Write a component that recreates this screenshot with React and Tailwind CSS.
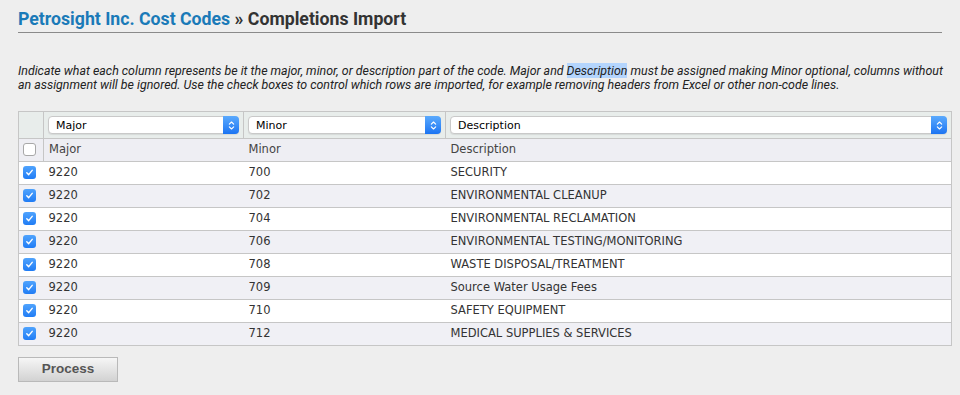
const rows = [
  ['9220', '700', 'SECURITY'],
  ['9220', '702', 'ENVIRONMENTAL CLEANUP'],
  ['9220', '704', 'ENVIRONMENTAL RECLAMATION'],
  ['9220', '706', 'ENVIRONMENTAL TESTING/MONITORING'],
  ['9220', '708', 'WASTE DISPOSAL/TREATMENT'],
  ['9220', '709', 'Source Water Usage Fees'],
  ['9220', '710', 'SAFETY EQUIPMENT'],
  ['9220', '712', 'MEDICAL SUPPLIES & SERVICES'],
];

const Check = ({ checked }) =>
  checked ? (
    <span className="inline-flex h-[13px] w-[13px] items-center justify-center rounded-[3px] bg-gradient-to-b from-[#4fa3fd] to-[#1f7cf5] align-middle">
      <svg viewBox="0 0 10 10" className="h-[9px] w-[9px]">
        <path d="M2 5.3 L4.1 7.4 L8 2.6" fill="none" stroke="white" strokeWidth="1.6" strokeLinecap="round" strokeLinejoin="round" />
      </svg>
    </span>
  ) : (
    <span className="inline-block h-[13px] w-[13px] rounded-[3px] border border-[#a8a8a8] bg-white align-middle" />
  );

const Select = ({ label }) => (
  <div className="flex h-[18px] w-full items-center rounded-[4px] border border-[#c9c9c9] bg-white shadow-[0_1px_1px_rgba(0,0,0,0.08)]">
    <span className="flex-1 pl-[7px] text-[11px] leading-none text-black">{label}</span>
    <span className="flex h-[18px] w-[16px] -mr-px -my-px items-center justify-center rounded-r-[4px] bg-gradient-to-b from-[#5aaafd] to-[#1b74f2]">
      <svg viewBox="0 0 8 12" className="h-[11px] w-[7px]">
        <path d="M1.5 4.5 L4 2 L6.5 4.5 M1.5 7.5 L4 10 L6.5 7.5" fill="none" stroke="white" strokeWidth="1.3" strokeLinecap="round" strokeLinejoin="round" />
      </svg>
    </span>
  </div>
);

export default function App() {
  return (
    <div className="min-h-[395px] bg-[#eeeeee] px-[18px] pt-[8px] font-['Roboto',sans-serif]">
      <h1 className="border-b border-[#8a8a8a] pb-[2px] text-[17.7px] font-bold leading-[22px] text-[#333]">
        <span className="text-[#1a7ab8]">Petrosight Inc. Cost Codes</span> » Completions Import
      </h1>

      <p className="-mr-[10px] mt-[31px] text-[12.4px] italic leading-[14px] text-[#222]">
        Indicate what each column represents be it the major, minor, or description part of the code. Major and{' '}
        <span className="bg-[#b4d5fd]">Description</span> must be assigned making Minor optional, columns without an
        assignment will be ignored. Use the check boxes to control which rows are imported, for example removing headers
        from Excel or other non-code lines.
      </p>

      <table className="mt-[19px] w-[934px] table-fixed border-collapse font-['DejaVu_Sans',sans-serif] text-[11.5px] text-[#333]">
        <colgroup>
          <col className="w-[25px]" />
          <col className="w-[200px]" />
          <col className="w-[202px]" />
          <col />
        </colgroup>
        <thead>
          <tr className="h-[27px] bg-[#e8edeb]">
            <td className="border border-[#c6c6c6] p-0" />
            <td className="border border-[#c6c6c6] px-[4px] py-0"><Select label="Major" /></td>
            <td className="border border-[#c6c6c6] px-[4px] py-0"><Select label="Minor" /></td>
            <td className="border border-[#c6c6c6] px-[4px] py-0"><Select label="Description" /></td>
          </tr>
          <tr className="h-[23px] bg-[#eeeef3] text-[#444]">
            <td className="border border-[#c6c6c6] py-0 pl-[4px]"><Check /></td>
            <td className="border-y border-[#c6c6c6] py-0 pl-[5px]">Major</td>
            <td className="border-y border-[#c6c6c6] py-0 pl-[5px]">Minor</td>
            <td className="border border-l-0 border-[#c6c6c6] py-0 pl-[5px]">Description</td>
          </tr>
        </thead>
        <tbody>
          {rows.map((r, i) => (
            <tr key={r[1]} className={`h-[23px] ${i % 2 ? 'bg-[#f0f0f5]' : 'bg-white'}`}>
              <td className="border-y border-l border-[#c6c6c6] py-0 pl-[4px]"><Check checked /></td>
              <td className="border-y border-[#c6c6c6] py-0 pl-[5px]">{r[0]}</td>
              <td className="border-y border-[#c6c6c6] py-0 pl-[5px]">{r[1]}</td>
              <td className="border-y border-r border-[#c6c6c6] py-0 pl-[5px]">{r[2]}</td>
            </tr>
          ))}
        </tbody>
      </table>

      <button className="mt-[11px] h-[25px] w-[100px] border border-[#b9b9b9] bg-gradient-to-b from-[#f6f6f6] to-[#d2d2d2] font-['Liberation_Sans',sans-serif] text-[13.5px] font-bold text-[#555]">
        Process
      </button>
    </div>
  );
}
